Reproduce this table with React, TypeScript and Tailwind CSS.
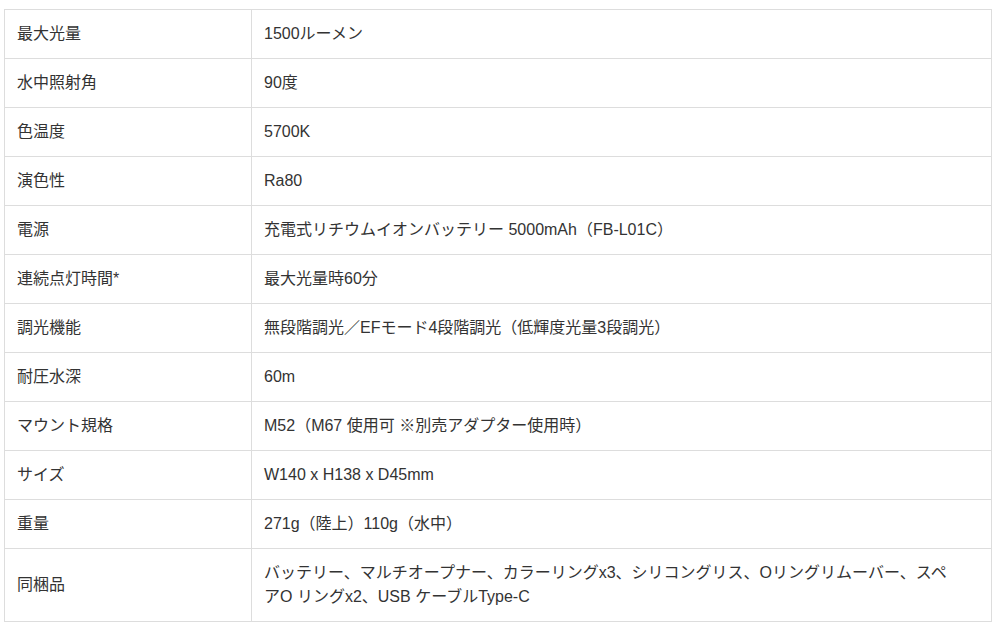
const rows: [string, string][] = [
  ["最大光量", "1500ルーメン"],
  ["水中照射角", "90度"],
  ["色温度", "5700K"],
  ["演色性", "Ra80"],
  ["電源", "充電式リチウムイオンバッテリー 5000mAh（FB-L01C）"],
  ["連続点灯時間*", "最大光量時60分"],
  ["調光機能", "無段階調光／EFモード4段階調光（低輝度光量3段調光）"],
  ["耐圧水深", "60m"],
  ["マウント規格", "M52（M67 使用可 ※別売アダプター使用時）"],
  ["サイズ", "W140 x H138 x D45mm"],
  ["重量", "271g（陸上）110g（水中）"],
  [
    "同梱品",
    "バッテリー、マルチオープナー、カラーリングx3、シリコングリス、Oリングリムーバー、スペアO リングx2、USB ケーブルType-C",
  ],
];

export default function App() {
  return (
    <div className="min-h-[630px] w-[1000px] bg-white pl-[4px] pt-[9px] font-['Liberation_Sans','Noto_Sans_CJK_JP',sans-serif] text-[16px] leading-6 text-[#333]">
      <table className="w-[988px] table-fixed border-collapse">
        <colgroup>
          <col className="w-[247px]" />
          <col />
        </colgroup>
        <tbody>
          {rows.map(([label, value]) => (
            <tr key={label}>
              <td className="border border-[#ddd] px-3 py-3 align-middle">{label}</td>
              <td className="border border-[#ddd] py-3 pl-3 pr-[38px] align-middle">{value}</td>
            </tr>
          ))}
        </tbody>
      </table>
    </div>
  );
}
